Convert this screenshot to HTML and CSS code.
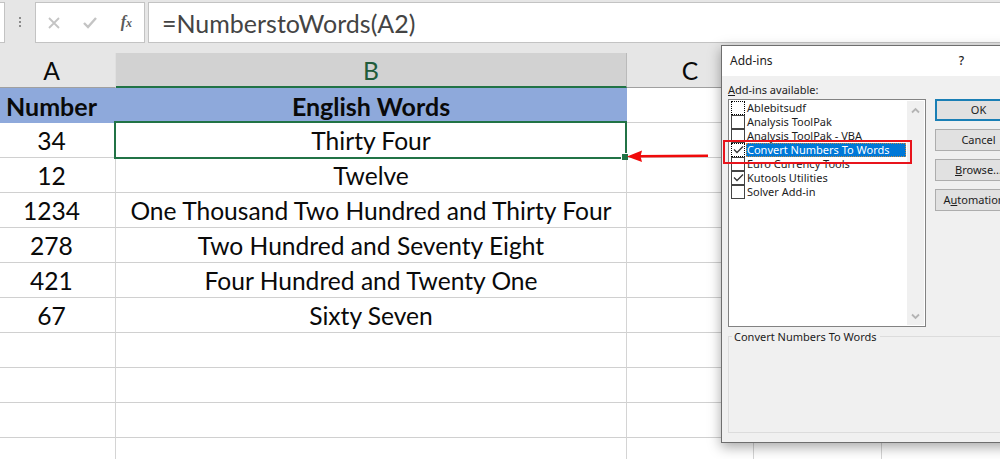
FILE: index.html
```
<!DOCTYPE html>
<html lang="en">

<head>
    <meta charset="UTF-8">
    <title>Add-ins</title>
    <link rel="stylesheet" href="styles.css">
</head>

<body>
    <div class="formula-bar">
        <div class="name-box"></div>
        <svg class="grip" width="30" height="40" viewBox="0 0 30 40">
            <path d="M15 15v2M15 19v2M15 23v2" stroke="#8c8c8c" stroke-width="2" />
        </svg>
        <div class="tools">
            <svg width="12" height="12" viewBox="0 0 12 12">
                <path d="M1 1l10 10M11 1L1 11" stroke="#c4c4c4" stroke-width="1.8" />
            </svg>
            <svg width="14" height="12" viewBox="0 0 14 12">
                <path d="M1 6l4 4L13 1" fill="none" stroke="#c4c4c4" stroke-width="2.4" />
            </svg>
            <span class="fx">f<small>x</small></span>
        </div>
        <div class="formula">=NumberstoWords(A2)</div>
    </div>

    <table class="sheet">
        <colgroup>
            <col class="col-a">
            <col class="col-b">
            <col class="col-c">
            <col class="col-d">
            <col class="col-e">
        </colgroup>
        <tr class="letters">
            <th>A</th>
            <th class="active">B</th>
            <th>C</th>
            <th></th>
            <th></th>
        </tr>
        <tr class="titles">
            <th>Number</th>
            <th>English Words</th>
            <td></td>
            <td></td>
            <td></td>
        </tr>
        <tr>
            <td>34</td>
            <td class="selected">Thirty Four</td>
            <td></td>
            <td></td>
            <td></td>
        </tr>
        <tr>
            <td>12</td>
            <td>Twelve</td>
            <td></td>
            <td></td>
            <td></td>
        </tr>
        <tr>
            <td>1234</td>
            <td>One Thousand Two Hundred and Thirty Four</td>
            <td></td>
            <td></td>
            <td></td>
        </tr>
        <tr>
            <td>278</td>
            <td>Two Hundred and Seventy Eight</td>
            <td></td>
            <td></td>
            <td></td>
        </tr>
        <tr>
            <td>421</td>
            <td>Four Hundred and Twenty One</td>
            <td></td>
            <td></td>
            <td></td>
        </tr>
        <tr>
            <td>67</td>
            <td>Sixty Seven</td>
            <td></td>
            <td></td>
            <td></td>
        </tr>
        <tr><td></td><td></td><td></td><td></td><td></td></tr>
        <tr><td></td><td></td><td></td><td></td><td></td></tr>
        <tr><td></td><td></td><td></td><td></td><td></td></tr>
        <tr><td></td><td></td><td></td><td></td><td></td></tr>
    </table>

    <svg class="arrow" width="82" height="14" viewBox="0 0 82 14">
        <path d="M12 7.3L81 6.7" stroke="#f00a0a" stroke-width="2.4" />
        <path d="M0 7.5L15 1.500L13.500 7.300L15 13z" fill="#f00a0a" />
    </svg>

    <div class="dialog">
        <div class="dialog-title">
            <span>Add-ins</span>
            <span class="help">?</span>
        </div>
        <div class="dialog-body">
            <div class="label"><u>A</u>dd-ins available:</div>
            <div class="main">
                <div class="list">
                    <ul>
                        <li><i class="box focus"></i><span>Ablebitsudf</span></li>
                        <li><i class="box"></i><span>Analysis ToolPak</span></li>
                        <li><i class="box"></i><span>Analysis ToolPak - VBA</span></li>
                        <li class="current"><i class="box focus"><svg width="11" height="9" viewBox="0 0 11 9"><path d="M1 4.500l3 3L10 1.500" /></svg></i><span>Convert Numbers To Words</span></li>
                        <li><i class="box"></i><span>Euro Currency Tools</span></li>
                        <li><i class="box"><svg width="11" height="9" viewBox="0 0 11 9"><path d="M1 4.500l3 3L10 1.500" /></svg></i><span>Kutools Utilities</span></li>
                        <li><i class="box"></i><span>Solver Add-in</span></li>
                    </ul>
                    <div class="scroll">
                        <svg width="9" height="7" viewBox="0 0 9 7"><path d="M1 5.500L4.500 2L8 5.500" /></svg>
                        <svg width="9" height="7" viewBox="0 0 9 7"><path d="M1 1.500L4.500 5L8 1.500" /></svg>
                    </div>
                </div>
                <div class="buttons">
                    <div class="btn primary">OK</div>
                    <div class="btn">Cancel</div>
                    <div class="btn"><u>B</u>rowse...</div>
                    <div class="btn">A<u>u</u>tomation...</div>
                </div>
            </div>
            <div class="details"><span>Convert Numbers To Words</span></div>
        </div>
        <div class="highlight"></div>
    </div>
</body>

</html>
```

FILE: styles.css
```
* {
    margin: 0;
    padding: 0;
    box-sizing: border-box;
}

body {
    position: relative;
    width: 1000px;
    height: 459px;
    overflow: hidden;
    background: #fff;
    color: #0a0a0a;
    font-family: Lato, "Liberation Sans", sans-serif;
}

/* formula bar */
.formula-bar {
    display: flex;
    height: 53px;
    padding-top: 2px;
    background: #e6e6e6;
}

.name-box,
.tools,
.formula {
    height: 41px;
    background: #fff;
    border: 1px solid #c3c3c3;
}

.name-box {
    width: 5px;
    border-left: 0;
}

.tools {
    display: flex;
    align-items: center;
    justify-content: space-between;
    width: 110px;
    padding: 0 12px 0 12px;
}

.fx {
    font: italic bold 16px/20px "Liberation Serif", serif;
    color: #5a5a5a;
}

.fx small {
    font-size: 12px;
}

.formula {
    flex: 1;
    margin-left: 3px;
    padding-left: 13px;
    border-right: 0;
    font-size: 25px;
    line-height: 41px;
    color: #444;
}

/* sheet */
.sheet {
    width: 1010px;
    table-layout: fixed;
    border-collapse: separate;
    border-spacing: 0;
    font-size: 24.6px;
    line-height: 32px;
    text-align: center;
}

.col-a {
    width: 116px;
}

.col-b {
    width: 511px;
}

.col-c {
    width: 127px;
}

.col-d {
    width: 128px;
}

.sheet td,
.sheet th {
    height: 35px;
    padding: 2px 12px 0 0;
    border-right: 1px solid #d4d4d4;
    border-bottom: 1px solid #d0d0d0;
    white-space: nowrap;
}

.sheet td:nth-child(2),
.sheet th:nth-child(2),
.sheet th:nth-child(3) {
    padding-right: 0;
}

.sheet .letters th {
    background: #e6e6e6;
    border-right-color: #e0e0e0;
    border-bottom-color: #a0a0a0;
    font-weight: normal;
}

.sheet .letters .active {
    background: #d2d2d2;
    border-right-color: #bababa;
    border-bottom: 2px solid #217346;
    color: #215c3c;
    line-height: 31px;
}

.sheet .titles th {
    background: #8ea9db;
    border-color: #8ea9db;
    font-size: 25px;
}

.sheet .selected {
    position: relative;
}

.selected::before {
    content: "";
    position: absolute;
    inset: -2px -1px -2px -2px;
    border: 2px solid #217346;
}

.selected::after {
    content: "";
    position: absolute;
    right: -2px;
    bottom: -3px;
    width: 6px;
    height: 6px;
    background: #217346;
    border: solid #fff;
    border-width: 1px 0 0 1px;
}

.arrow {
    position: absolute;
    left: 627px;
    top: 149px;
}

/* add-ins window */
.dialog {
    position: absolute;
    left: 721px;
    top: 45px;
    width: 312px;
    height: 398px;
    background: #f0f0f0;
    border: 1px solid #6e6e6e;
    box-shadow: 0 4px 12px rgba(0, 0, 0, .35);
    font: 11px/14px "Noto Sans", "Open Sans", sans-serif;
    color: #1c1c1c;
}

.dialog-title {
    display: flex;
    justify-content: space-between;
    height: 30px;
    padding: 0 68px 0 8px;
    background: #fff;
    font-size: 12px;
    line-height: 30px;
}

.help {
    font-weight: 500;
}

.dialog-body {
    padding: 7px 6px 0;
}

.label {
    height: 16px;
}

.main {
    display: flex;
    gap: 9px;
}

.list {
    display: flex;
    justify-content: space-between;
    width: 198px;
    height: 228px;
    padding: 1px;
    background: #fff;
    border: 1px solid #828282;
}

.list ul {
    width: 176px;
    list-style: none;
}

.list li {
    display: flex;
    height: 14px;
    white-space: nowrap;
}

.list li span {
    flex: 1;
    margin-left: 1px;
    padding-left: 1px;
    line-height: 13px;
}

.list .current span {
    background: #0078d7;
    color: #fff;
    outline: 1px dotted #c08a4a;
    outline-offset: -1px;
}

.box {
    width: 14px;
    height: 14px;
    margin-left: 1px;
    background: #fff;
    border: 1px solid #444;
}

.box.focus {
    border: 1px dotted #000;
}

.box svg {
    display: block;
    margin: 1px 0 0 1px;
}

.box path {
    fill: none;
    stroke: #333;
    stroke-width: 1.3;
}

.scroll {
    display: flex;
    flex-direction: column;
    align-items: center;
    justify-content: space-between;
    width: 17px;
    padding: 6px 1px 5px 0;
    background: #f0f0f0;
}

.scroll path {
    fill: none;
    stroke: #b4b4b4;
    stroke-width: 1.8;
}

.buttons {
    display: flex;
    flex-direction: column;
    gap: 8px;
}

.btn {
    width: 87px;
    height: 22px;
    background: #e1e1e1;
    border: 1px solid #adadad;
    line-height: 20px;
    text-align: center;
}

.btn.primary {
    border: 2px solid #1a7fb5;
    line-height: 18px;
}

.details {
    width: 298px;
    height: 97px;
    margin-top: 9px;
    border: 1px solid #dcdcdc;
}

.details span {
    display: block;
    width: 148px;
    margin: -7px 0 0 3px;
    padding-left: 2px;
    background: #f0f0f0;
}

.highlight {
    position: absolute;
    left: 1px;
    top: 94px;
    width: 189px;
    height: 24px;
    border: 2px solid #e8141c;
}
```
